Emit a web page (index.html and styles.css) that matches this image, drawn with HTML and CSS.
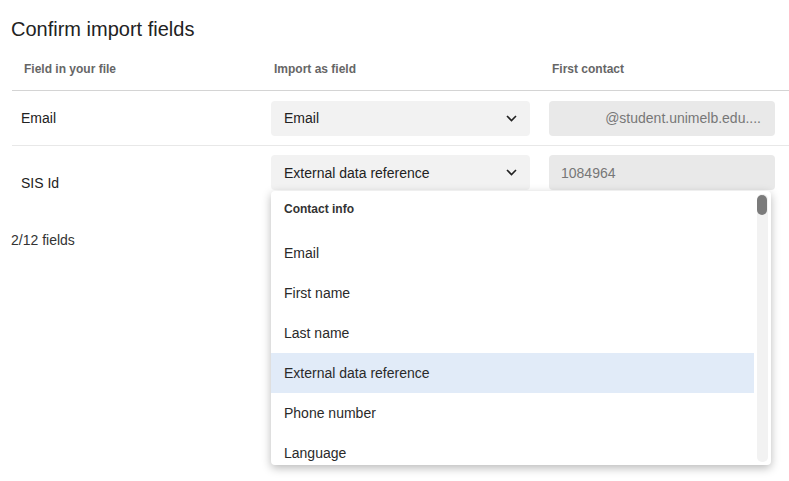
FILE: index.html
```html
<!DOCTYPE html>
<html lang="en">
<head>
  <meta charset="UTF-8">
  <meta name="viewport" content="width=device-width, initial-scale=1.0">
  <title>Confirm import fields</title>
  <link rel="stylesheet" href="styles.css">
</head>
<body>
  <div class="page">
    <h1 class="title">Confirm import fields</h1>

    <div class="table">
      <div class="row head">
        <div class="cell first">Field in your file</div>
        <div class="cell">Import as field</div>
        <div class="cell">First contact</div>
      </div>

      <div class="row">
        <div class="cell first name">Email</div>
        <div class="cell">
          <div class="select">
            <span>Email</span>
            <svg class="chevron" width="11" height="7" viewBox="0 0 11 7"><path d="M1 1l4.5 4.5L10 1" fill="none" stroke="#222" stroke-width="1.6"/></svg>
          </div>
        </div>
        <div class="cell">
          <div class="value right">@student.unimelb.edu....</div>
        </div>
      </div>

      <div class="row last">
        <div class="cell first name">SIS Id</div>
        <div class="cell">
          <div class="select-wrap">
            <div class="select">
              <span>External data reference</span>
              <svg class="chevron" width="11" height="7" viewBox="0 0 11 7"><path d="M1 1l4.5 4.5L10 1" fill="none" stroke="#222" stroke-width="1.6"/></svg>
            </div>
            <div class="menu">
              <div class="menu-list">
                <div class="menu-group">Contact info</div>
                <div class="menu-item">Email</div>
                <div class="menu-item">First name</div>
                <div class="menu-item">Last name</div>
                <div class="menu-item selected">External data reference</div>
                <div class="menu-item">Phone number</div>
                <div class="menu-item">Language</div>
              </div>
              <div class="scrollbar"><div class="thumb"></div></div>
            </div>
          </div>
        </div>
        <div class="cell">
          <div class="value">1084964</div>
        </div>
      </div>
    </div>

    <p class="count">2/12 fields</p>
  </div>
</body>
</html>
```

FILE: styles.css
```css
html, body {
  height: 100%;
}

body {
  margin: 0;
  font-family: "Liberation Sans", Arial, sans-serif;
  color: #2a2a2a;
  background: #fff;
}

.page {
  min-height: 100%;
  box-sizing: border-box;
  padding: 17px 0 0 11px;
}

.title {
  margin: 0;
  font-size: 20px;
  font-weight: normal;
  line-height: 24px;
  color: #222;
}

.table {
  margin: 14px 0 0 1px;
}

.row {
  display: grid;
  grid-template-columns: 259px 278px 226px;
  align-items: center;
  height: 54px;
  border-bottom: 1px solid #e8e8e8;
}

.row.head {
  height: 35px;
  border-bottom: 1px solid #d4d4d4;
  font-size: 12px;
  font-weight: bold;
  color: #666;
}

.row.head .cell {
  padding-left: 3px;
  align-self: start;
  padding-top: 7px;
}

.row.head .cell.first {
  padding-left: 12px;
}

.row.last {
  border-bottom: none;
}

.cell.name {
  padding-left: 9px;
  font-size: 14px;
  color: #222;
}

.row.last .cell {
  align-self: start;
  padding-top: 9px;
}

.row.last .cell.name {
  padding-top: 29px;
}

.select-wrap {
  position: relative;
  width: 259px;
}

.select {
  width: 259px;
  height: 35px;
  box-sizing: border-box;
  padding: 0 12px 0 13px;
  display: flex;
  align-items: center;
  justify-content: space-between;
  background: #f2f2f2;
  border-radius: 4px;
  font-size: 14px;
  color: #222;
}

.chevron {
  display: block;
  margin-right: 1px;
}

.value {
  height: 35px;
  box-sizing: border-box;
  padding: 0 12px;
  display: flex;
  align-items: center;
  background: #e9e9e9;
  border-radius: 4px;
  font-size: 14px;
  color: #777;
}

.value.right {
  justify-content: flex-end;
  padding-right: 14px;
}

.menu {
  position: absolute;
  top: 36px;
  left: 0;
  width: 500px;
  height: 274px;
  display: flex;
  background: #fff;
  border-radius: 4px;
  box-shadow: 0 3px 10px rgba(0, 0, 0, 0.28);
  overflow: hidden;
  z-index: 2;
}

.menu-list {
  flex: 1;
}

.menu-group {
  padding: 10px 13px 16px;
  line-height: 16px;
  font-size: 12px;
  font-weight: bold;
  color: #333;
}

.menu-item {
  height: 40px;
  line-height: 40px;
  padding-left: 13px;
  font-size: 14px;
  color: #2a2a2a;
}

.menu-item.selected {
  background: #e1ebf8;
}

.scrollbar {
  width: 11px;
  margin: 3px;
  background: #f2f2f2;
  border-radius: 5px;
}

.thumb {
  width: 10px;
  height: 20px;
  margin-top: 1px;
  background: #7b7b7b;
  border-radius: 5px;
}

.count {
  margin: 32px 0 0;
  font-size: 14px;
  color: #333;
}
```
